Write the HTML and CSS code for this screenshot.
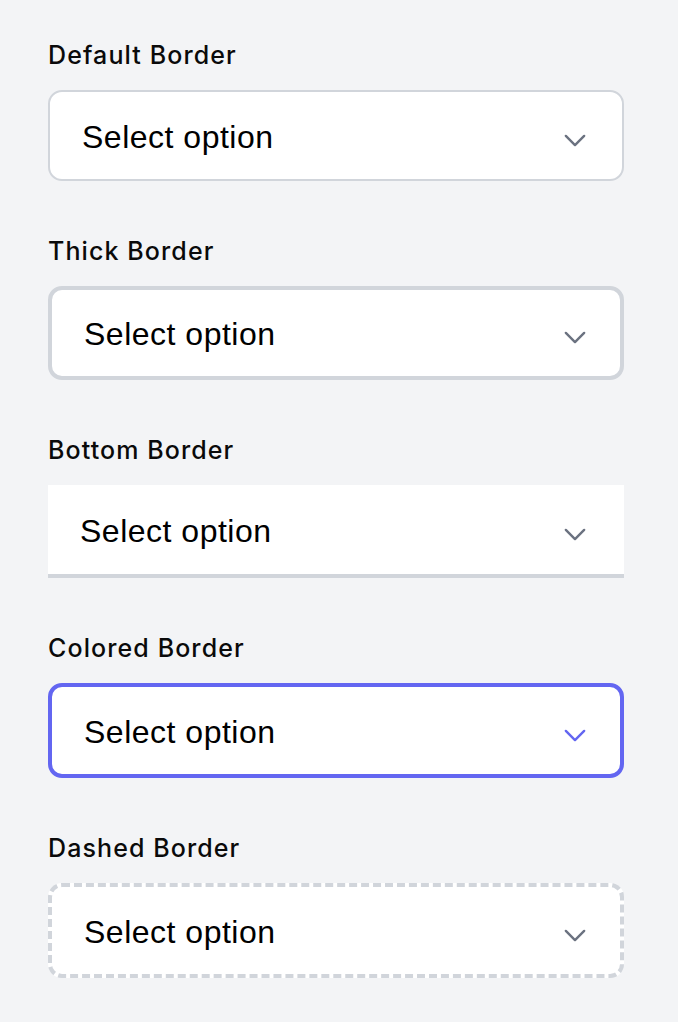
FILE: index.html
```html
<!DOCTYPE html>
<html lang="en">
<head>
<meta charset="utf-8">
<title>Select borders</title>
<link rel="stylesheet" href="styles.css">
</head>
<body>
<main class="page">
  <section class="field">
    <label class="label">Default Border</label>
    <div class="select select-default">
      <span class="value">Select option</span>
      <svg class="chevron" viewBox="0 0 24 14" aria-hidden="true"><path d="M2 2l10 10 10-10"/></svg>
    </div>
  </section>
  <section class="field">
    <label class="label">Thick Border</label>
    <div class="select select-thick">
      <span class="value">Select option</span>
      <svg class="chevron" viewBox="0 0 24 14" aria-hidden="true"><path d="M2 2l10 10 10-10"/></svg>
    </div>
  </section>
  <section class="field">
    <label class="label">Bottom Border</label>
    <div class="select select-bottom">
      <span class="value">Select option</span>
      <svg class="chevron" viewBox="0 0 24 14" aria-hidden="true"><path d="M2 2l10 10 10-10"/></svg>
    </div>
  </section>
  <section class="field">
    <label class="label">Colored Border</label>
    <div class="select select-colored">
      <span class="value">Select option</span>
      <svg class="chevron chevron-colored" viewBox="0 0 24 14" aria-hidden="true"><path d="M2 2l10 10 10-10"/></svg>
    </div>
  </section>
  <section class="field">
    <label class="label">Dashed Border</label>
    <div class="select select-dashed">
      <span class="value">Select option</span>
      <svg class="chevron" viewBox="0 0 24 14" aria-hidden="true"><path d="M2 2l10 10 10-10"/></svg>
    </div>
  </section>
</main>
</body>
</html>
```
FILE: styles.css
```css
html, body {
  margin: 0;
  padding: 0;
  background: #f3f4f6;
}

body {
  font-family: "Inter", "Liberation Sans", Arial, sans-serif;
  color: #111111;
}

.page {
  display: flex;
  flex-direction: column;
  gap: 54px;
  padding: 39px 54px 0 48px;
}

.field {
  display: flex;
  flex-direction: column;
  gap: 19px;
}

.label {
  font-size: 25px;
  line-height: 32px;
  font-weight: 500;
  letter-spacing: 1.1px;
  color: #0a0a0a;
}

.select {
  box-sizing: border-box;
  display: flex;
  align-items: center;
  justify-content: space-between;
  background: #ffffff;
  padding: 0 36px 0 32px;
}

.value {
  font-family: "Liberation Sans", Arial, sans-serif;
  font-size: 32px;
  line-height: 40px;
  color: #000000;
  letter-spacing: 0.5px;
  margin-top: 2px;
}

.chevron {
  width: 22px;
  height: 13px;
  margin-top: 9px;
  fill: none;
  stroke: #6b7280;
  stroke-width: 2.6;
  stroke-linecap: round;
  stroke-linejoin: round;
}

.chevron-colored {
  stroke: #6366f1;
}

.select-default {
  height: 91px;
  border: 2px solid #d1d5db;
  border-radius: 14px;
}

.select-thick {
  height: 94px;
  border: 4px solid #d1d5db;
  border-radius: 14px;
  padding-right: 34px;
}

.select-bottom {
  height: 93px;
  border-bottom: 4px solid #d1d5db;
  padding-right: 38px;
}

.select-colored {
  height: 95px;
  border: 4px solid #6366f1;
  border-radius: 14px;
  padding-right: 34px;
}

.select-dashed {
  height: 95px;
  border: 4px dashed #d1d5db;
  border-radius: 14px;
  padding-right: 34px;
}
```
